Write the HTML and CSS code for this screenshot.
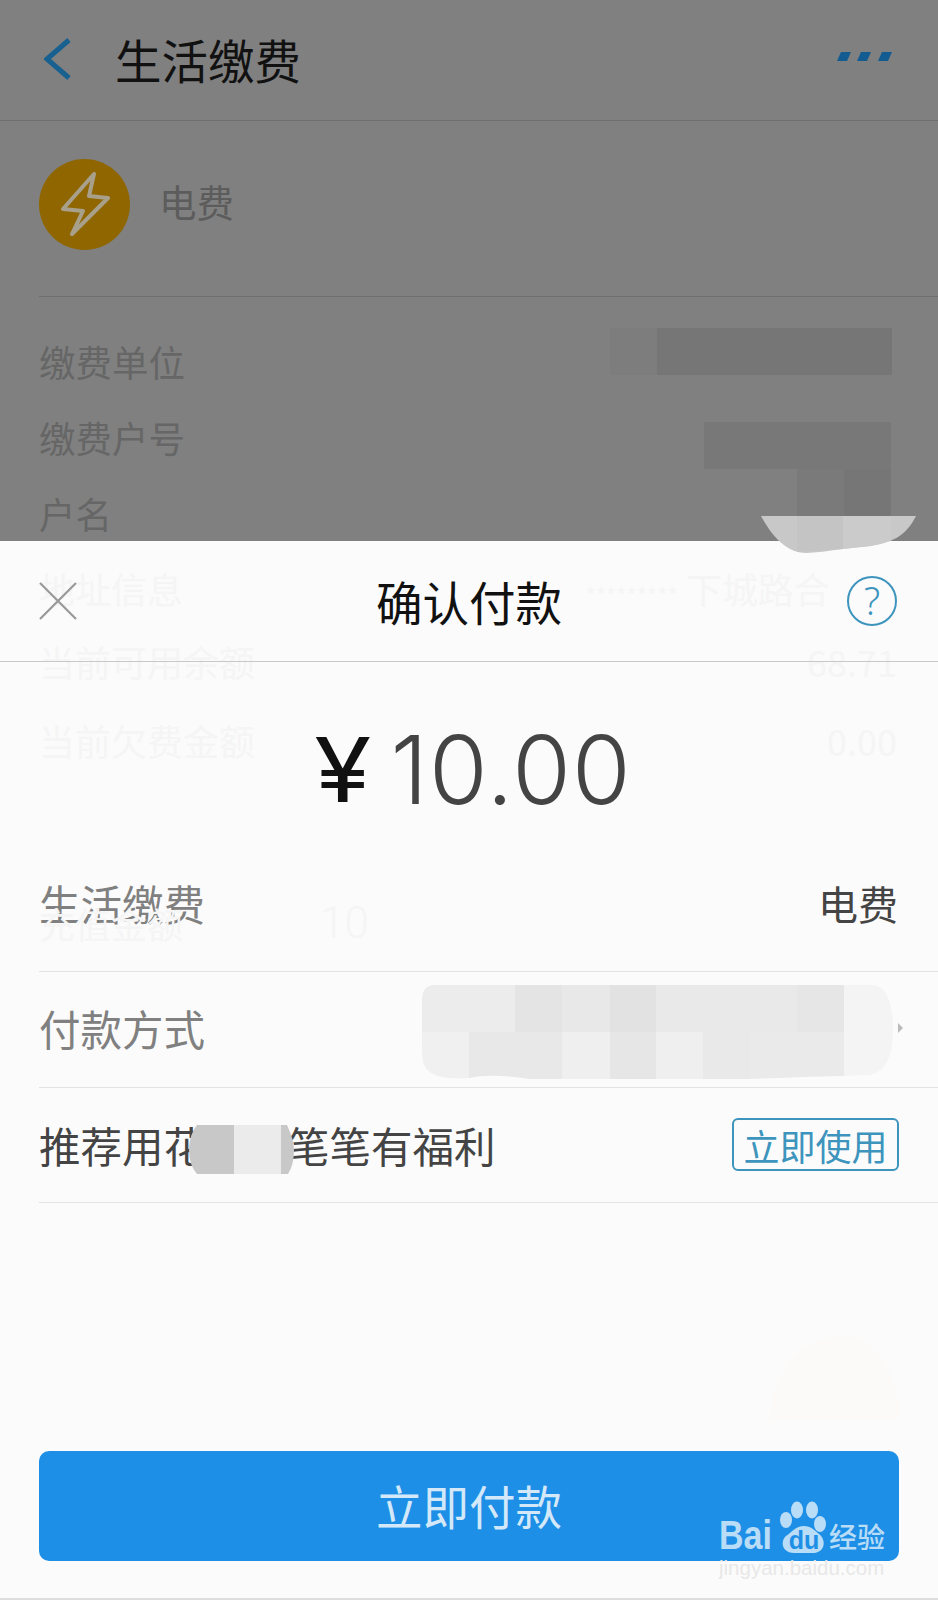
FILE: index.html
```html
<!DOCTYPE html>
<html lang="zh-CN">
<head>
<meta charset="utf-8">
<title>确认付款</title>
<link rel="stylesheet" href="styles.css">
</head>
<body>
<div class="page">
  <header class="topbar">
    <svg class="back" width="27" height="42" viewBox="0 0 27 42"><path d="M25 2 3 21 25 40" fill="none" stroke="#17608f" stroke-width="5"/></svg>
    <h1 class="topbar-title">生活缴费</h1>
    <svg class="more" width="56" height="12" viewBox="0 0 56 12"><path d="M4 1H14L10 10H0ZM24 1H34L30 10H20ZM45 1H55L51 10H41Z" fill="#125c92"/></svg>
  </header>
  <section class="biller">
    <div class="biller-icon">
      <svg width="50" height="66" viewBox="0 0 50 66"><path d="M34 3 3 38 23 40 12 63 48 27 29 25Z" fill="none" stroke="#a8a08a" stroke-width="4" stroke-linejoin="round"/></svg>
    </div>
    <span class="biller-name">电费</span>
  </section>
  <section class="details">
    <div class="detail">缴费单位</div>
    <div class="detail">缴费户号</div>
    <div class="detail">户名</div>
  </section>

  <div class="dialog">
    <div class="ghost">
      <div class="ghost-row ghost-a"><span>地址信息</span><span class="ghost-addr"><span class="ghost-stars">*********</span> 下城路合</span></div>
      <div class="ghost-row ghost-b"><span>当前可用余额</span><span>68.71</span></div>
      <div class="ghost-row ghost-c"><span>当前欠费金额</span><span>0.00</span></div>
      <div class="ghost-row ghost-d"><span>充值金额</span><span class="ghost-num">10</span></div>
    </div>
    <div class="dialog-head">
      <svg class="close" width="38" height="38" viewBox="0 0 38 38"><path d="M1 1 37 37M37 1 1 37" stroke="#999" stroke-width="2.2" fill="none"/></svg>
      <h2 class="dialog-title">确认付款</h2>
      <span class="help">?</span>
    </div>
    <div class="amount"><span class="yen">¥</span><span class="sum">10.00</span></div>
    <div class="row row-first"><span class="muted">生活缴费</span><span class="row-value">电费</span></div>
    <div class="row row-pay"><span class="muted">付款方式</span><span class="chev"></span></div>
    <div class="row row-promo"><span>推荐用花呗，笔笔有福利</span><button class="use">立即使用</button></div>
    <div class="spacer"></div>
    <button class="pay">立即付款</button>
  </div>

  <svg class="redactions" width="938" height="1600" viewBox="0 0 938 1600">
    <defs>
      <clipPath id="pay-clip"><path d="M432 985H875Q893 990 893 1030Q893 1070 870 1075Q800 1077 750 1079H530Q490 1073 470 1078Q440 1080 430 1072Q422 1068 422 1050V1000Q422 987 432 985Z"/></clipPath>
      <clipPath id="promo-clip"><path d="M197 1125H287Q294 1140 294 1150Q294 1165 288 1174H197Q189 1165 189 1150Q189 1135 197 1125Z"/></clipPath>
    </defs>
    <g class="mosaic-dark">
      <rect x="610" y="328" width="47" height="47" fill="#7d7d7d"/>
      <rect x="657" y="328" width="235" height="47" fill="#767676"/>
      <rect x="704" y="422" width="187" height="47" fill="#787878"/>
      <rect x="797" y="469" width="47" height="47" fill="#7a7a7a"/>
      <rect x="844" y="469" width="47" height="47" fill="#767676"/>
    </g>
    <path d="M761 516H916C906 536 892 544 862 547C838 549 818 553 806 553C790 553 775 542 761 516Z" fill="#c8c8c8"/>
    <path d="M797 516H843V549L797 552Z" fill="#c4c4c4"/>
    <path d="M843 516H891V540C880 545 870 546 843 549Z" fill="#cbcbcb"/>
    <path d="M770 1415C775 1360 810 1335 855 1335C885 1350 900 1385 900 1420H770Z" fill="#fcfaf8"/>
    <g clip-path="url(#pay-clip)">
      <rect x="422" y="985" width="93" height="47" fill="#ececec"/>
      <rect x="515" y="985" width="47" height="47" fill="#e4e4e4"/>
      <rect x="562" y="985" width="48" height="47" fill="#e8e8e8"/>
      <rect x="610" y="985" width="46" height="47" fill="#e2e2e2"/>
      <rect x="656" y="985" width="141" height="47" fill="#e9e9e9"/>
      <rect x="797" y="985" width="47" height="47" fill="#e6e6e6"/>
      <rect x="844" y="985" width="49" height="47" fill="#f4f4f4"/>
      <rect x="422" y="1032" width="47" height="47" fill="#f0f0f0"/>
      <rect x="469" y="1032" width="93" height="47" fill="#e8e8e8"/>
      <rect x="562" y="1032" width="48" height="47" fill="#efefef"/>
      <rect x="610" y="1032" width="46" height="47" fill="#e6e6e6"/>
      <rect x="656" y="1032" width="47" height="47" fill="#efefef"/>
      <rect x="703" y="1032" width="47" height="47" fill="#e9e9e9"/>
      <rect x="750" y="1032" width="94" height="47" fill="#eaeaea"/>
      <rect x="844" y="1032" width="49" height="47" fill="#f4f4f4"/>
    </g>
    <g clip-path="url(#promo-clip)">
      <rect x="189" y="1125" width="45" height="49" fill="#c8c8c8"/>
      <rect x="234" y="1125" width="47" height="49" fill="#ebebeb"/>
      <rect x="281" y="1125" width="13" height="49" fill="#c8c8c8"/>
    </g>
  </svg>

  <div class="watermark">
    <div class="wm-logo">
      <span class="wm-bai">Bai</span>
      <span class="wm-paw">
        <svg width="46" height="54" viewBox="0 0 46 54"><g fill="#b9dcf7"><ellipse cx="17" cy="11" rx="6" ry="8.5"/><ellipse cx="32" cy="11" rx="6" ry="8.5"/><ellipse cx="6" cy="21" rx="6" ry="8"/><ellipse cx="40" cy="25" rx="6" ry="8"/><path d="M24 27C31 27 34 31 39 35C46 40 46 53 34 54H14C2 54 0 42 6 37C12 33 16 27 24 27Z"/></g></svg>
        <span class="wm-du">du</span>
      </span>
      <span class="wm-cn">经验</span>
    </div>
    <div class="wm-url">jingyan.baidu.com</div>
  </div>
</div>
</body>
</html>
```

FILE: styles.css
```css
* { box-sizing: border-box; }
html, body { margin: 0; padding: 0; }
body { width: 938px; height: 1600px; overflow: hidden; font-family: "Noto Sans CJK SC", "Noto Sans", sans-serif; }
.page { position: relative; width: 938px; height: 1600px; background: #808080; overflow: hidden; }

.topbar { display: flex; align-items: center; height: 121px; padding: 0 45px 2px 44px; border-bottom: 1px solid #6e6e6e; }
.back { flex: none; }
.topbar-title { margin: 0 0 0 44px; font-size: 46.5px; font-weight: 400; line-height: 60px; color: #111; flex: 1; }
.more { flex: none; margin-bottom: 5px; }

.biller { display: flex; align-items: center; height: 176px; margin-left: 39px; border-bottom: 1px solid #6e6e6e; padding-bottom: 9px; }
.biller-icon { width: 91px; height: 91px; border-radius: 50%; background: #8f6600; display: flex; align-items: center; justify-content: center; }
.biller-name { margin: 0 0 6px 29px; font-size: 37.5px; color: #5c5c5c; line-height: 50px; }

.details { padding: 27px 0 0 39px; }
.detail { height: 76px; line-height: 76px; font-size: 36.5px; color: #666; }

.dialog { position: absolute; left: 0; right: 0; top: 541px; bottom: 0; display: flex; flex-direction: column; background: #fbfbfb; border-bottom: 2px solid #dedede; }
.ghost { position: absolute; left: 39px; right: 41px; top: 0; color: #f5f5f5; font-size: 36px; }
.ghost-row { position: absolute; left: 0; right: 0; display: flex; justify-content: space-between; line-height: 50px; }
.ghost-a { top: 22px; }
.ghost-b { top: 95px; }
.ghost-c { top: 174px; }
.ghost-d { top: 357px; justify-content: flex-start; }
.ghost-addr { margin-right: 67px; }
.ghost-stars { font-size: 22px; }
.ghost-num { margin-left: 137px; font-family: Roboto, sans-serif; font-weight: 300; font-size: 44px; }

.dialog-head { position: relative; display: flex; align-items: center; justify-content: space-between; height: 121px; padding: 0 41px 0 39px; border-bottom: 1px solid #c8c8c8; }
.dialog-title { position: absolute; left: 0; right: 0; top: 29px; margin: 0; text-align: center; font-size: 46.5px; font-weight: 400; line-height: 62px; color: #111; }
.help { width: 50px; height: 50px; border: 2.5px solid #3d94bd; border-radius: 50%; text-align: center; font-family: "Noto Sans", sans-serif; font-weight: 300; font-size: 38px; line-height: 44px; color: #3d94bd; }

.amount { display: flex; align-items: center; justify-content: center; height: 179px; padding: 36px 0 0 12px; color: #444; }
.yen { font-family: Inter, sans-serif; font-weight: 400; font-size: 90px; color: #111; line-height: 110px; margin-right: 23px; transform: scaleX(1.15); }
.sum { font-family: Inter, sans-serif; font-weight: 300; font-size: 95px; line-height: 110px; letter-spacing: 1.2px; }

.row { display: flex; align-items: center; justify-content: space-between; margin-left: 39px; padding-right: 39px; font-size: 41.5px; color: #444; border-bottom: 1px solid #e3e3e3; }
.row-first { height: 131px; padding-bottom: 7px; padding-right: 40px; }
.row-value { font-size: 40px; }
.row-pay { height: 116px; padding-bottom: 4px; }
.row-promo { height: 115px; padding-top: 0; }
.muted { color: #808080; }
.chev { width: 0; height: 0; border-left: 5px solid #bbb; border-top: 5px solid transparent; border-bottom: 5px solid transparent; margin-right: -4px; }
.use { width: 167px; height: 53px; padding: 0; border: 2.5px solid #3d94bd; border-radius: 6px; background: transparent; color: #3d94bd; font-family: inherit; font-size: 36px; line-height: 44px; margin-top: -1px; }

.spacer { flex: 1; }
.pay { flex: none; height: 110px; margin: 0 39px 37px; padding: 0 0 4px; border: 0; border-radius: 10px; background: #1e8fe6; color: #d3e8f9; font-family: inherit; font-size: 46.5px; }

.redactions { position: absolute; left: 0; top: 0; pointer-events: none; }

.watermark { position: absolute; left: 719px; top: 1499px; width: 170px; }
.wm-logo { display: flex; align-items: flex-end; height: 54px; color: #b9dcf7; }
.wm-bai { width: 61px; margin-bottom: -5px; font-family: "Liberation Sans", sans-serif; font-weight: 700; font-size: 34px; line-height: 40px; transform: scaleY(1.18); transform-origin: left bottom; }
.wm-paw { position: relative; width: 46px; height: 54px; flex: none; }
.wm-paw svg { display: block; }
.wm-du { position: absolute; left: 7px; bottom: 0; width: 34px; text-align: center; font-family: "Liberation Sans", sans-serif; font-weight: 700; font-size: 25px; line-height: 26px; color: #1e8fe6; }
.wm-cn { margin: 0 0 -1px 3px; font-size: 28px; font-weight: 500; line-height: 36px; white-space: nowrap; }
.wm-url { margin-top: 3px; font-family: "Liberation Sans", sans-serif; font-size: 20.5px; line-height: 24px; color: #e8e8e8; white-space: nowrap; }
```
